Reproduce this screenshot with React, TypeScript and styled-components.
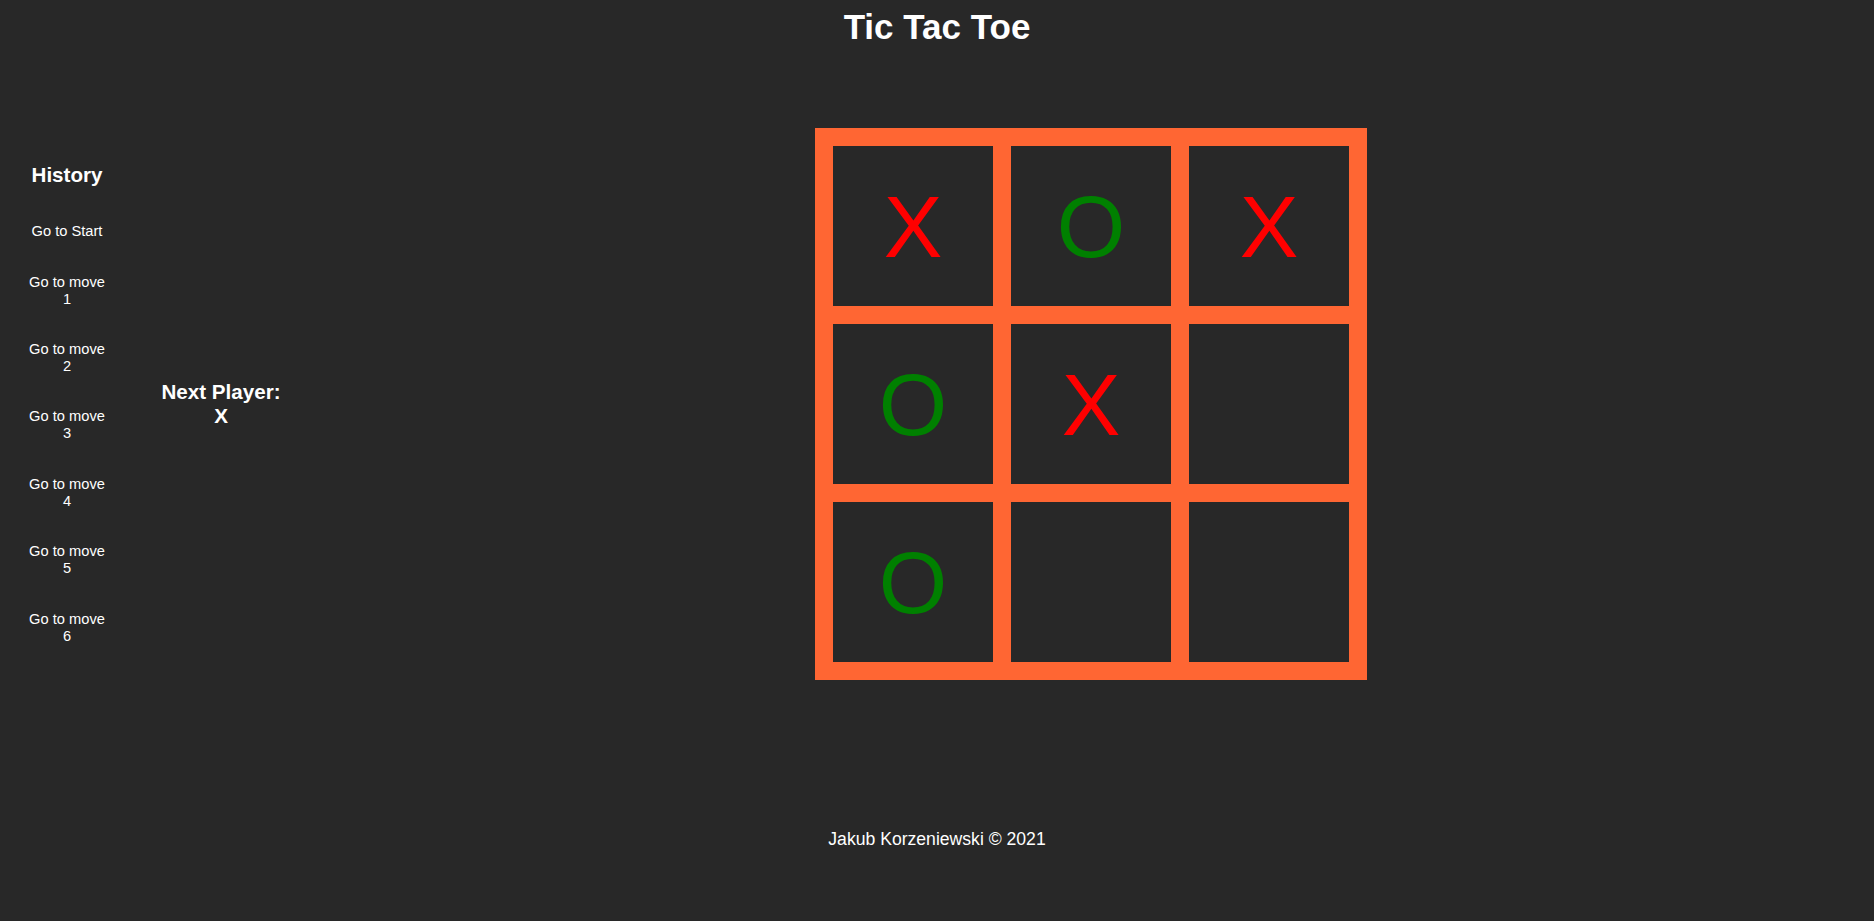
import * as React from 'react';
import styled, { createGlobalStyle } from 'styled-components';

const GlobalStyle = createGlobalStyle`
  html, body {
    margin: 0;
    padding: 0;
    background: #282828;
    color: #fff;
    font-family: "Liberation Sans", Arial, sans-serif;
  }
`;

const Page = styled.div`
  min-height: 100vh;
  display: flex;
  flex-direction: column;
`;

const Title = styled.h1`
  margin: 7px 0 0;
  font-size: 35px;
  line-height: 39px;
  font-weight: 700;
  text-align: center;
`;

const Game = styled.main`
  margin-top: 82px;
  display: grid;
  grid-template-columns: 134px 174px 1fr;
  align-items: center;
`;

const History = styled.aside`
  display: flex;
  flex-direction: column;
  align-items: center;
`;

const Heading = styled.h3`
  margin: 0;
  font-size: 20.6px;
  line-height: 23.7px;
  font-weight: 700;
  text-align: center;
`;

const HistoryHeading = styled(Heading)`
  margin-bottom: 35px;
`;

const Moves = styled.ol`
  list-style: none;
  margin: 0;
  padding: 0;
  display: flex;
  flex-direction: column;
  align-items: center;
  gap: 33.5px;
`;

const MoveButton = styled.button`
  width: 80px;
  padding: 0;
  border: none;
  background: none;
  color: #fff;
  font-family: "Liberation Sans", Arial, sans-serif;
  font-size: 14.67px;
  line-height: 16.9px;
  text-align: center;
  cursor: pointer;
`;

const Status = styled.div`
  display: flex;
  flex-direction: column;
  align-items: center;
`;

const BoardArea = styled.div`
  display: flex;
  justify-content: center;
`;

const Board = styled.div`
  display: grid;
  grid-template-columns: repeat(3, 160px);
  grid-template-rows: repeat(3, 160px);
  gap: 18px;
  padding: 18px;
  background: #ff6633;
`;

const Cell = styled.div<{ $mark: string | null }>`
  display: flex;
  align-items: center;
  justify-content: center;
  background: #282828;
  font-size: 88px;
  line-height: 101px;
  color: ${p => (p.$mark === 'X' ? '#ff0000' : '#008000')};
`;

const Footer = styled.footer`
  margin-top: 149px;
  text-align: center;
  font-size: 17.6px;
  line-height: 20.2px;
`;

const squares: (string | null)[] = ['X', 'O', 'X', 'O', 'X', null, 'O', null, null];

export default function App() {
  const moves = ['Go to Start', ...[1, 2, 3, 4, 5, 6].map(n => `Go to move ${n}`)];
  return (
    <Page>
      <GlobalStyle />
      <Title>Tic Tac Toe</Title>
      <Game>
        <History>
          <HistoryHeading>History</HistoryHeading>
          <Moves>
            {moves.map(m => (
              <li key={m}>
                <MoveButton>{m}</MoveButton>
              </li>
            ))}
          </Moves>
        </History>
        <Status>
          <Heading>Next Player:</Heading>
          <Heading>X</Heading>
        </Status>
        <BoardArea>
          <Board>
            {squares.map((s, i) => (
              <Cell key={i} $mark={s}>{s}</Cell>
            ))}
          </Board>
        </BoardArea>
      </Game>
      <Footer>Jakub Korzeniewski © 2021</Footer>
    </Page>
  );
}
